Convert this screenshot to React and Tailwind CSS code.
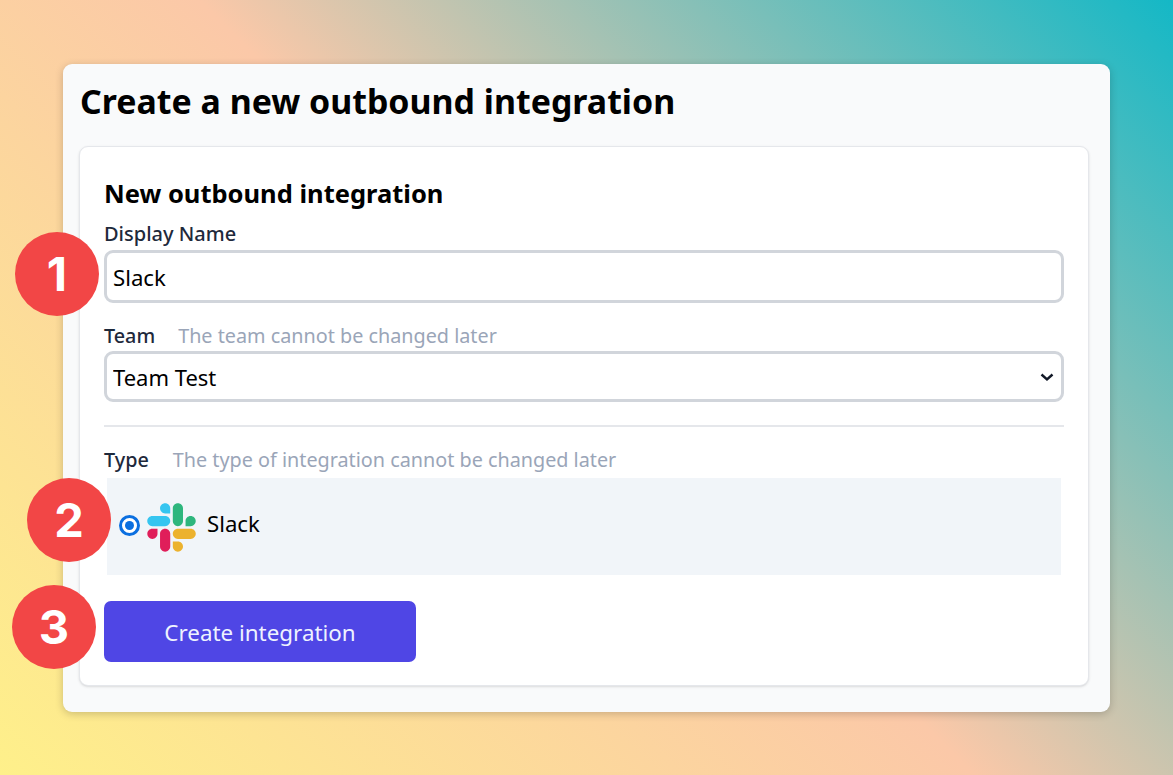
import React from "react";

const Badge = ({ className, children }) => (
  <div
    className={`absolute flex h-[84px] w-[84px] items-center justify-center rounded-full bg-[#f24646] text-[47px] font-bold text-white ${className}`}
    style={{ fontFamily: "Inter, sans-serif" }}
  >
    {children}
  </div>
);

const SlackLogo = () => (
  <svg viewBox="0 0 127 127" className="h-[49px] w-[49px] shrink-0">
    <path d="M27.2 80c0 7.3-5.9 13.2-13.2 13.2C6.7 93.2.8 87.3.8 80c0-7.3 5.9-13.2 13.2-13.2h13.2V80zm6.6 0c0-7.3 5.9-13.2 13.2-13.2 7.3 0 13.2 5.9 13.2 13.2v33c0 7.3-5.9 13.2-13.2 13.2-7.3 0-13.2-5.9-13.2-13.2V80z" fill="#E01E5A" />
    <path d="M47 27c-7.3 0-13.2-5.9-13.2-13.2C33.8 6.5 39.7.6 47 .6c7.3 0 13.2 5.9 13.2 13.2V27H47zm0 6.7c7.3 0 13.2 5.9 13.2 13.2 0 7.3-5.9 13.2-13.2 13.2H13.9C6.6 60.1.7 54.2.7 46.9c0-7.3 5.9-13.2 13.2-13.2H47z" fill="#36C5F0" />
    <path d="M99.9 46.9c0-7.3 5.9-13.2 13.2-13.2 7.3 0 13.2 5.9 13.2 13.2 0 7.3-5.9 13.2-13.2 13.2H99.9V46.9zm-6.6 0c0 7.3-5.9 13.2-13.2 13.2-7.3 0-13.2-5.9-13.2-13.2V13.8C66.9 6.5 72.8.6 80.1.6c7.3 0 13.2 5.9 13.2 13.2v33.1z" fill="#2EB67D" />
    <path d="M80.1 99.8c7.3 0 13.2 5.9 13.2 13.2 0 7.3-5.9 13.2-13.2 13.2-7.3 0-13.2-5.9-13.2-13.2V99.8h13.2zm0-6.6c-7.3 0-13.2-5.9-13.2-13.2 0-7.3 5.9-13.2 13.2-13.2h33.1c7.3 0 13.2 5.9 13.2 13.2 0 7.3-5.9 13.2-13.2 13.2H80.1z" fill="#ECB22E" />
  </svg>
);

const App = () => {
  return (
    <div
      className="relative h-[775px] w-[1173px] overflow-hidden bg-[linear-gradient(45deg,#fef08a_0%,#fbc8a8_50%,#14b8c6_100%)] pl-[63px] pt-[64px]"
      style={{ fontFamily: '"Noto Sans", sans-serif' }}
    >
      {/* Outer card */}
      <div className="h-[648px] w-[1047px] rounded-[9px] bg-[#f9fafb] px-[16px] pt-[13px] shadow-[0_2px_8px_rgba(0,0,0,0.2)]">
        <h1 className="ml-[1px] text-[33.9px] font-bold leading-[48px] text-black">
          Create a new outbound integration
        </h1>

        {/* Inner card */}
        <div className="mt-[21px] h-[540px] w-[1010px] rounded-[9px] border border-[#e5e7eb] bg-white px-[24px] pt-[27px] shadow-sm">
          <h2 className="text-[25.5px] font-bold leading-[38px] text-black">New outbound integration</h2>

          <label className="mt-[7px] block text-[20px] font-medium leading-[29px] text-[#1e293b]">
            Display Name
          </label>
          <input
            readOnly
            value="Slack"
            className="mt-[2px] block h-[53px] w-[960px] rounded-[9px] border-[3px] border-[#d1d5db] bg-white px-[6px] pt-[2px] text-[22.2px] text-black outline-none"
          />

          <div className="mt-[18px] flex items-baseline gap-[23px] leading-[29px]">
            <span className="text-[19.8px] font-medium text-[#1e293b]">Team</span>
            <span className="text-[19.8px] text-[#9aa5b8]">The team cannot be changed later</span>
          </div>
          <div className="relative mt-[1px] h-[51px] w-[960px]">
            <select className="block h-full w-full appearance-none rounded-[9px] border-[3px] border-[#d1d5db] bg-white px-[6px] pt-[2px] text-[22px] text-black outline-none">
              <option>Team Test</option>
            </select>
            <svg
              viewBox="0 0 16 16"
              className="pointer-events-none absolute right-[9px] top-[18px] h-[16px] w-[16px]"
              fill="none"
              stroke="#111827"
              strokeWidth="2.4"
            >
              <path d="M2.5 5.5 8 10.5l5.5-5" />
            </svg>
          </div>

          <div className="mt-[23px] h-[2px] w-[960px] bg-[#e5e7eb]" />

          <div className="mt-[18px] flex items-baseline gap-[24px] leading-[29px]">
            <span className="text-[19.8px] font-medium text-[#1e293b]">Type</span>
            <span className="text-[19.8px] text-[#9aa5b8]">The type of integration cannot be changed later</span>
          </div>

          <div className="ml-[3px] mt-[4px] flex h-[97px] w-[954px] items-center bg-[#f1f5f9] pb-[2px] pl-[12px]">
            <div className="flex h-[21px] w-[21px] shrink-0 items-center justify-center rounded-full border-[3px] border-[#0b6fe0] bg-white">
              <div className="h-[9px] w-[9px] rounded-full bg-[#0b6fe0]" />
            </div>
            <div className="ml-[7px] mt-[3px]">
              <SlackLogo />
            </div>
            <span className="mb-[4px] ml-[11px] text-[22.2px] text-black">Slack</span>
          </div>

          <button className="mt-[26px] flex h-[61px] w-[312px] items-center justify-center rounded-[7px] bg-[#4f46e5] pt-[2px] text-[22.4px] text-[#eef2ff]">
            Create integration
          </button>
        </div>
      </div>

      <Badge className="left-[15px] top-[232px]">1</Badge>
      <Badge className="left-[27px] top-[478px]">2</Badge>
      <Badge className="left-[12px] top-[585px]">3</Badge>
    </div>
  );
};

export default App;
